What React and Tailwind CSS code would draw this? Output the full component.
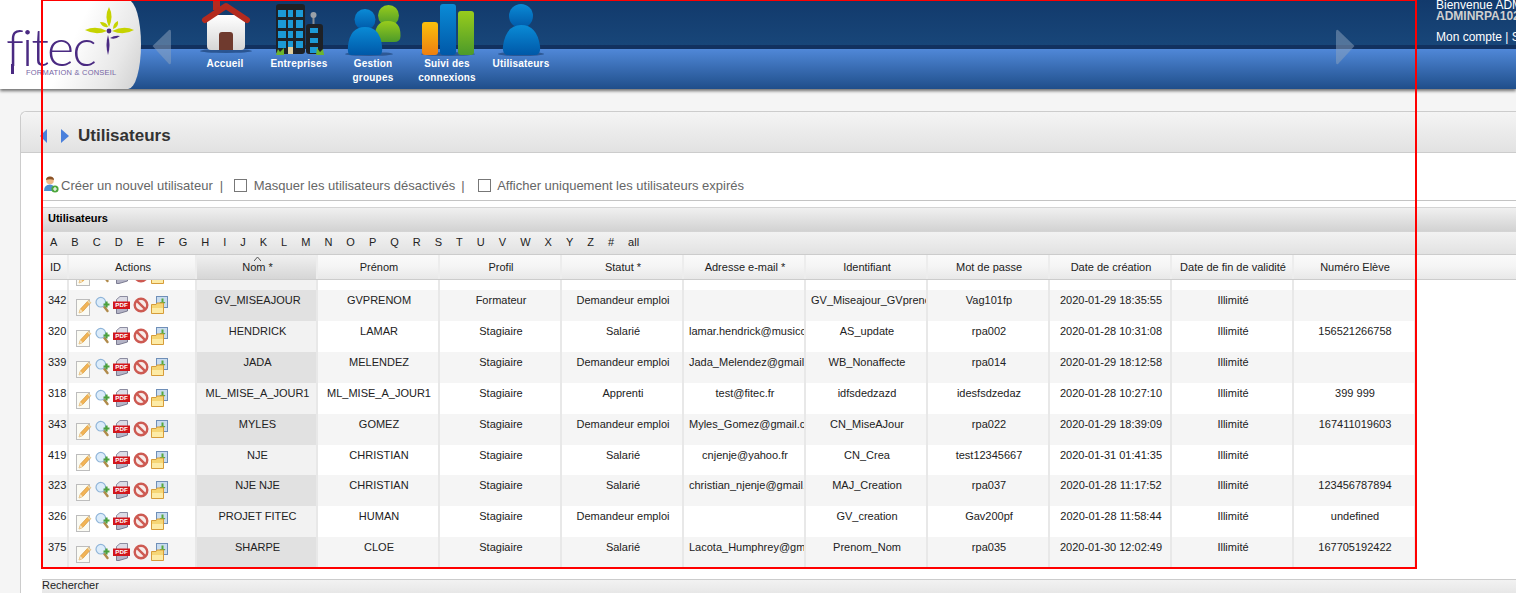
import React from 'react';

const columns = ['Prénom', 'Profil', 'Statut *', 'Adresse e-mail *', 'Identifiant', 'Mot de passe', 'Date de création', 'Date de fin de validité', 'Numéro Elève'];

const rows = [
    ['342', 'GV_MISEAJOUR', 'GVPRENOM', 'Formateur', 'Demandeur emploi', '', 'GV_Miseajour_GVprenom', 'Vag101fp', '2020-01-29 18:35:55', 'Illimité', ''],
    ['320', 'HENDRICK', 'LAMAR', 'Stagiaire', 'Salarié', 'lamar.hendrick@musicco.fr', 'AS_update', 'rpa002', '2020-01-28 10:31:08', 'Illimité', '156521266758'],
    ['339', 'JADA', 'MELENDEZ', 'Stagiaire', 'Demandeur emploi', 'Jada_Melendez@gmail.com', 'WB_Nonaffecte', 'rpa014', '2020-01-29 18:12:58', 'Illimité', ''],
    ['318', 'ML_MISE_A_JOUR1', 'ML_MISE_A_JOUR1', 'Stagiaire', 'Apprenti', 'test@fitec.fr', 'idfsdedzazd', 'idesfsdzedaz', '2020-01-28 10:27:10', 'Illimité', '399 999'],
    ['343', 'MYLES', 'GOMEZ', 'Stagiaire', 'Demandeur emploi', 'Myles_Gomez@gmail.com', 'CN_MiseAJour', 'rpa022', '2020-01-29 18:39:09', 'Illimité', '167411019603'],
    ['419', 'NJE', 'CHRISTIAN', 'Stagiaire', 'Salarié', 'cnjenje@yahoo.fr', 'CN_Crea', 'test12345667', '2020-01-31 01:41:35', 'Illimité', ''],
    ['323', 'NJE NJE', 'CHRISTIAN', 'Stagiaire', 'Salarié', 'christian_njenje@gmail.com', 'MAJ_Creation', 'rpa037', '2020-01-28 11:17:52', 'Illimité', '123456787894'],
    ['326', 'PROJET FITEC', 'HUMAN', 'Stagiaire', 'Demandeur emploi', '', 'GV_creation', 'Gav200pf', '2020-01-28 11:58:44', 'Illimité', 'undefined'],
    ['375', 'SHARPE', 'CLOE', 'Stagiaire', 'Salarié', 'Lacota_Humphrey@gmail.com', 'Prenom_Nom', 'rpa035', '2020-01-30 12:02:49', 'Illimité', '167705192422'],
];

const letters = ['A', 'B', 'C', 'D', 'E', 'F', 'G', 'H', 'I', 'J', 'K', 'L', 'M', 'N', 'O', 'P', 'Q', 'R', 'S', 'T', 'U', 'V', 'W', 'X', 'Y', 'Z', '#', 'all'];

// Action icons of a table row
const EditIcon = () => (
    <svg width="16" height="18" viewBox="0 0 16 18" className="mt-[2px] shrink-0">
        <rect x="0.5" y="1.5" width="13" height="16" fill="#fbfbf4" stroke="#bdbdbd" />
        <path d="M3 15 L4.4 11 L12.4 2.4 L14.8 4.6 L6.8 13.4 Z" fill="#f2b455" stroke="#cf8f2e" strokeWidth="0.6" />
        <path d="M12.4 2.4 L14.8 4.6 L13.8 5.7 L11.4 3.5 Z" fill="#e9dcb6" />
        <path d="M3 15 L4.4 11 L6.8 13.4 Z" fill="#f5e2bd" />
    </svg>
);

const ZoomIcon = () => (
    <svg width="15" height="17" viewBox="0 0 15 17" className="shrink-0">
        <path d="M9 10.5 L12.5 15" stroke="#b08a4a" strokeWidth="2.4" strokeLinecap="round" />
        <circle cx="5.8" cy="6.2" r="4.8" fill="#dcecfa" stroke="#8fb4d8" strokeWidth="1.2" />
        <path d="M8.5 8.5 H14.5 M11.5 5.5 V11.5" stroke="#4aa03c" strokeWidth="2.2" />
    </svg>
);

const PdfIcon = () => (
    <svg width="17" height="18" viewBox="0 0 17 18" className="shrink-0">
        <path d="M3.5 7 V3.5 L7 0.5 H14.5 V7 Z" fill="#dcdce6" stroke="#73738c" strokeWidth="0.8" />
        <path d="M3.5 12 H14.5 V15 L6 17.5 H3.5 Z" fill="#b4b4c6" stroke="#65657e" strokeWidth="0.8" />
        <rect x="0" y="5.5" width="17" height="7.5" fill="#d2161c" />
        <text x="8.5" y="11.4" textAnchor="middle" fontSize="6.2" fontWeight="700" fill="#fff" fontFamily="Liberation Sans, sans-serif">PDF</text>
    </svg>
);

const BanIcon = () => (
    <svg width="16" height="16" viewBox="0 0 16 16" className="mt-[1px] shrink-0">
        <circle cx="8" cy="8" r="6.3" fill="#f7ecea" stroke="#cd5a52" strokeWidth="2.4" />
        <path d="M3.8 3.8 L12.2 12.2" stroke="#cd5a52" strokeWidth="2.4" />
    </svg>
);

const FolderIcon = () => (
    <svg width="17" height="18" viewBox="0 0 17 18" className="shrink-0">
        <rect x="5.5" y="0.5" width="11" height="11" fill="#c9dcef" stroke="#6f8fb8" />
        <path d="M8.5 6 H10.5 V2.5 H12.5 V6 H14.5 L11.5 9.5 Z" fill="#55a83e" />
        <path d="M0.5 8.5 H5 L6 7 H12.5 V17.5 H0.5 Z" fill="#f6d675" stroke="#d69c3a" />
        <path d="M1 12 H12 V17 H1 Z" fill="#fdeba6" />
    </svg>
);

// Header nav drawings
const HouseIcon = () => (
    <svg width="56" height="56" viewBox="0 0 56 56">
        <defs>
            <linearGradient id="wall" x1="0" y1="0" x2="0" y2="1">
                <stop offset="0" stopColor="#ffffff" />
                <stop offset="1" stopColor="#d6d6d6" />
            </linearGradient>
        </defs>
        <ellipse cx="29" cy="51" rx="26" ry="2" fill="#0f2f5c" opacity="0.55" />
        <rect x="10" y="15" width="38" height="35" rx="4" fill="url(#wall)" />
        <rect x="16" y="0" width="7" height="10" fill="#b62a1e" />
        <path d="M8 20 L29 6 L50 20" fill="none" stroke="#b32a1e" strokeWidth="6" strokeLinejoin="round" strokeLinecap="round" />
        <path d="M22 50 V35 Q22 32 25 32 H33 Q36 32 36 35 V50 Z" fill="#6f3a2e" />
    </svg>
);

const BuildingIcon = () => {
    const cols = [[7, 8], [17, 5], [25, 7]];
    const rowsY = [[10, 7], [20, 8], [31, 7], [41, 7]];
    return (
        <svg width="56" height="56" viewBox="0 0 56 56">
            <rect x="5" y="4" width="29" height="50" rx="3" fill="#1e2126" />
            <rect x="35" y="24" width="17" height="30" rx="3" fill="#1e2126" />
            <rect x="41.5" y="15" width="2" height="9" fill="#8a8f96" />
            <circle cx="42.5" cy="15" r="3" fill="#9aa0a8" />
            {rowsY.map(([y, h]) => cols.map(([x, w]) => (
                <rect key={`${x}-${y}`} x={x} y={y} width={w} height={h} fill="#1c9ad6" />
            )))}
            {[[28, 5], [38, 5], [47, 6]].map(([y, h]) => <rect key={y} x="39" y={y} width="8" height={h} fill="#1c9ad6" />)}
            <rect x="17" y="47" width="5" height="7" fill="#e0cfa0" />
            <path d="M5 55 L7 49 L9 52 L13 48 L13 55 Z" fill="#6cb52d" />
            <path d="M45 55 L46 48 L49 52 L52 49 L53 55 Z" fill="#6cb52d" />
        </svg>
    );
};

const GroupIcon = () => (
    <svg width="56" height="56" viewBox="0 0 56 56">
        <defs>
            <linearGradient id="blueUser" x1="0" y1="0" x2="0" y2="1">
                <stop offset="0" stopColor="#0a8bd6" />
                <stop offset="1" stopColor="#0058a8" />
            </linearGradient>
            <linearGradient id="greenUser" x1="0" y1="0" x2="0" y2="1">
                <stop offset="0" stopColor="#98cc1c" />
                <stop offset="1" stopColor="#4c9a2a" />
            </linearGradient>
        </defs>
        <ellipse cx="24" cy="54" rx="24" ry="2" fill="#0f2f5c" opacity="0.5" />
        <circle cx="43.5" cy="15.5" r="10.5" fill="url(#greenUser)" />
        <path d="M30 42 Q28 21 43 21 Q56 21 55.5 36 Q55.5 42 49 42 Z" fill="url(#greenUser)" />
        <circle cx="20" cy="19.5" r="10.5" fill="url(#blueUser)" />
        <path d="M6 55 Q2 55 3 46 Q5 27 20 27 Q35 27 37 46 Q38 55 34 55 Z" fill="url(#blueUser)" />
    </svg>
);

const BarsIcon = () => (
    <svg width="56" height="56" viewBox="0 0 56 56">
        <defs>
            <linearGradient id="orangeBar" x1="0" y1="0" x2="0" y2="1">
                <stop offset="0" stopColor="#fcc00c" />
                <stop offset="1" stopColor="#ee7f10" />
            </linearGradient>
            <linearGradient id="blueBar" x1="0" y1="0" x2="0" y2="1">
                <stop offset="0" stopColor="#0a8bd6" />
                <stop offset="1" stopColor="#0058a8" />
            </linearGradient>
            <linearGradient id="greenBar" x1="0" y1="0" x2="0" y2="1">
                <stop offset="0" stopColor="#98cc1c" />
                <stop offset="1" stopColor="#4c9a2a" />
            </linearGradient>
        </defs>
        <ellipse cx="29" cy="54" rx="27" ry="2" fill="#0f2f5c" opacity="0.5" />
        <rect x="3" y="22" width="16" height="33" rx="3" fill="url(#orangeBar)" />
        <rect x="21" y="4" width="16" height="51" rx="3" fill="url(#blueBar)" />
        <rect x="39" y="11" width="16" height="44" rx="3" fill="url(#greenBar)" />
    </svg>
);

const UserIcon = () => (
    <svg width="56" height="56" viewBox="0 0 56 56">
        <defs>
            <linearGradient id="soloUser" x1="0" y1="0" x2="0" y2="1">
                <stop offset="0" stopColor="#0a8bd6" />
                <stop offset="1" stopColor="#0058a8" />
            </linearGradient>
        </defs>
        <ellipse cx="28" cy="54" rx="23" ry="2" fill="#0f2f5c" opacity="0.5" />
        <circle cx="28" cy="16" r="12" fill="url(#soloUser)" />
        <path d="M15 55 Q9 55 10 46 Q13 25 28 25 Q44 25 47 46 Q48 55 42 55 Z" fill="url(#soloUser)" />
    </svg>
);

const navItems = [
    { key: 'home', label: 'Accueil', icon: <HouseIcon /> },
    { key: 'companies', label: 'Entreprises', icon: <BuildingIcon /> },
    { key: 'groups', label: ['Gestion', 'groupes'], icon: <GroupIcon /> },
    { key: 'stats', label: ['Suivi des', 'connexions'], icon: <BarsIcon /> },
    { key: 'users', label: 'Utilisateurs', icon: <UserIcon /> },
];

const Logo = () => (
    <div className="relative h-[89px] w-[141px] shrink-0 rounded-r-[13px_45px] bg-[linear-gradient(115deg,#ffffff_50%,#e8e8e8_80%,#cfcfcf_100%)]">
        <div className="pl-[6px] pt-[26px] font-['Lato',sans-serif] text-[52px] font-light leading-[40px] tracking-[-2px] text-[#4a2a82]">fitec</div>
        <div className="mt-[5px] whitespace-nowrap pl-[26px] text-[7.5px] leading-[4px] tracking-[0.2px] text-[#7565a5]">FORMATION &amp; CONSEIL</div>
        <svg width="141" height="89" viewBox="0 0 141 89" className="absolute left-0 top-0">
            <rect x="11" y="64" width="3" height="10" fill="#4a2a82" />
            <path d="M109 7 Q114 16 109 27 Q104 16 109 7 Z" fill="#c6d300" />
            <path d="M134 30 Q124 36 112 31 Q124 25 134 30 Z" fill="#c6d300" />
            <path d="M85 30 Q96 25 107 31 Q96 36 85 30 Z" fill="#c6d300" />
            <path d="M100 22 Q107 22 108 27 Q102 28 100 22 Z" fill="#c6d300" />
            <path d="M118 21 Q119 27 113 29 Q113 23 118 21 Z" fill="#c6d300" />
            <circle cx="109" cy="31" r="2.4" fill="#4a2a82" />
            <path d="M108 35 Q111 45 108 55 Q105 45 108 35 Z" fill="#4a2a82" />
            <path d="M110 38 Q115 35 120 36 Q115 40 110 38 Z" fill="#4a2a82" />
        </svg>
    </div>
);

const Header = () => (
    <header className="flex h-[89px] bg-[linear-gradient(#123a6c_0,#184679_45px,#12315f_45px,#12315f_49px,#5088d8_49px,#1f4e8a_89px)] shadow-[0_2px_3px_rgba(0,0,0,0.55)]">
        <Logo />
        <svg width="20" height="36" viewBox="0 0 20 36" className="ml-[11px] mt-[29px] shrink-0">
            <path d="M0.5 17 L17 1 Q19 0 19 3 V33 Q19 36 17 35 Z" fill="#8ea4bd" opacity="0.5" />
        </svg>
        <nav className="ml-[16px] flex">
            {navItems.map((item) => (
                <div key={item.key} className="flex w-[74px] flex-col items-center">
                    {item.icon}
                    <div className="pt-[1px] text-center text-[10px] font-bold leading-[14px] tracking-[0.2px] text-white">
                        {[item.label].flat().map(line => <div key={line}>{line}</div>)}
                    </div>
                </div>
            ))}
        </nav>
        <div className="flex-1" />
        <svg width="20" height="36" viewBox="0 0 20 36" className="mt-[29px] shrink-0">
            <path d="M19.5 17 L3 1 Q1 0 1 3 V33 Q1 36 3 35 Z" fill="#8ea4bd" opacity="0.5" />
        </svg>
        <div className="ml-[81px] w-[80px] shrink-0 overflow-hidden whitespace-nowrap text-[12px] text-white">
            <div className="leading-[11px]">Bienvenue ADMINRPA</div>
            <div className="font-bold leading-[11px] text-[#d0d0d0]">ADMINRPA102030</div>
            <div className="pt-[8px] leading-[14px]">Mon compte | Se déconnecter</div>
        </div>
    </header>
);

const Toolbar = () => (
    <div className="flex h-[48px] items-start border-b border-[#c4c4c4] pt-[24px] text-[13px] leading-[18px] text-[#666666]">
        <svg width="16" height="17" viewBox="0 0 16 17" className="ml-[1px] -mt-[1px] shrink-0">
            <circle cx="7" cy="4.5" r="3.8" fill="#eeb98a" />
            <path d="M3 4 Q3 0.5 7 0.5 Q11 0.5 11 4 Q7 2.5 3 4 Z" fill="#8a5226" />
            <path d="M1 15 Q1 8.5 7 8.5 Q12 8.5 12 15 Z" fill="#4f8fd0" />
            <circle cx="12" cy="13" r="3.6" fill="#4ca63c" />
            <path d="M10 13 H14 M12 11 V15" stroke="#fff" strokeWidth="1.2" />
        </svg>
        <span className="ml-[2px]">Créer un nouvel utilisateur</span>
        <span className="ml-[7px]">|</span>
        <input type="checkbox" readOnly className="ml-[11px] mt-[2px] h-[13px] w-[13px] appearance-none border border-[#777777] bg-white" />
        <span className="ml-[6.5px]">Masquer les utilisateurs désactivés</span>
        <span className="ml-[6px]">|</span>
        <input type="checkbox" readOnly className="ml-[13px] mt-[2px] h-[13px] w-[13px] appearance-none border border-[#777777] bg-white" />
        <span className="ml-[6.5px]">Afficher uniquement les utilisateurs expirés</span>
    </div>
);

const gridClass = 'grid w-[1374px] grid-cols-[27px_128px_121px_repeat(9,122px)]';

const HeaderCell = ({ children, sorted }) => (
    <div className={`relative h-[24px] border-r-2 border-[#ededed] pl-[2px] text-center leading-[24px] ${sorted ? 'bg-[linear-gradient(#f0f0f0,#d6d6d6)]' : 'bg-[linear-gradient(#fafafa_0,#f4f4f4_50%,#e8e8e8_100%)]'}`}>
        {children}
    </div>
);

const Cell = ({ children, className = '' }) => (
    <div className={`h-[30.85px] overflow-hidden whitespace-nowrap border-r-2 border-[#e8e8e8] pl-[5px] pr-[3px] pt-[4px] leading-[13px] ${className}`}>
        {children}
    </div>
);

const Actions = () => (
    <div className="flex h-[30.85px] items-start overflow-hidden border-r-2 border-[#e8e8e8] pl-[7px] pt-[6px]">
        <EditIcon />
        <div className="ml-[3px]"><ZoomIcon /></div>
        <div className="ml-[3px]"><PdfIcon /></div>
        <div className="ml-[3px]"><BanIcon /></div>
        <div className="ml-[2px]"><FolderIcon /></div>
    </div>
);

const Row = ({ data, odd }) => (
    <div className={`${gridClass} ${odd ? 'bg-[#f5f5f5]' : 'bg-white'}`}>
        <Cell className="pl-[6px] pr-0 text-left">{data[0]}</Cell>
        <Actions />
        <Cell className={`text-center ${odd ? 'bg-[#e1e1e1]' : 'bg-[#f2f2f2]'}`}>{data[1]}</Cell>
        {data.slice(2).map((value, i) => (
            <Cell key={i} className="text-center">{value}</Cell>
        ))}
    </div>
);

const Table = () => (
    <div className="text-[11px] text-[#222222]">
        <div className="mt-[6px] h-[25px] border-y border-[#d4d4d4] bg-[linear-gradient(#f0f0f0,#d2d2d2)] pl-[6px] text-[11px] font-bold leading-[20px] text-black">Utilisateurs</div>
        <div className="flex h-[23px] items-center gap-[14px] border-b border-[#cccccc] bg-[linear-gradient(#f2f2f2,#e2e2e2)] pb-[2px] pl-[8px]">
            {letters.map(letter => <span key={letter}>{letter}</span>)}
        </div>
        <div className="border-b border-[#cccccc] bg-[linear-gradient(#fafafa_0,#f4f4f4_50%,#e8e8e8_100%)]">
            <div className={gridClass}>
                <HeaderCell>ID</HeaderCell>
                <HeaderCell>Actions</HeaderCell>
                <HeaderCell sorted>
                    <svg width="7" height="4" viewBox="0 0 7 4" className="absolute left-[57px] top-[2px]">
                        <path d="M0 4 L3.5 0 L7 4" fill="none" stroke="#555555" strokeWidth="1" />
                    </svg>
                    Nom *
                </HeaderCell>
                {columns.map(col => <HeaderCell key={col}>{col}</HeaderCell>)}
            </div>
        </div>
        <div className="h-[288px] overflow-hidden">
            <div className="-mt-[20.45px]">
                <Row data={['', '', '', '', '', '', '', '', '', '', '']} odd={false} />
                {rows.map((row, i) => <Row key={row[0]} data={row} odd={i % 2 === 0} />)}
            </div>
        </div>
        <div className="mt-[11px] h-[20px] border-t border-[#cccccc] bg-[linear-gradient(#f2f2f2,#e2e2e2)] text-[11px] leading-[11px]">Rechercher</div>
    </div>
);

const App = () => {
    return (
        <div className="relative h-[593px] w-[1516px] overflow-hidden bg-[#f5f5f5] font-['Liberation_Sans',Arial,sans-serif]">
            <Header />
            <main className="ml-[20px] mt-[22px] rounded-tl-[6px] border-l border-t border-[#cccccc] bg-white">
                <div className="flex h-[41px] items-center rounded-tl-[6px] border-b border-[#cccccc] bg-[linear-gradient(#f4f4f4,#e2e2e2)] pl-[19px] pt-[7px]">
                    <svg width="7" height="14" viewBox="0 0 7 14" className="shrink-0">
                        <path d="M7 0 V14 L0 7 Z" fill="#4a80dc" />
                    </svg>
                    <svg width="8" height="14" viewBox="0 0 8 14" className="ml-[14px] shrink-0">
                        <path d="M0 0 V14 L8 7 Z" fill="#4a80dc" />
                    </svg>
                    <h1 className="ml-[9px] text-[17px] font-bold leading-[20px] text-[#333333]">Utilisateurs</h1>
                </div>
                <div className="pl-[21px]">
                    <Toolbar />
                    <Table />
                </div>
            </main>
            <div className="absolute -top-[1px] left-[41px] h-[570px] w-[1376px] border-2 border-[#ff0000]" />
        </div>
    );
};

export default App;
